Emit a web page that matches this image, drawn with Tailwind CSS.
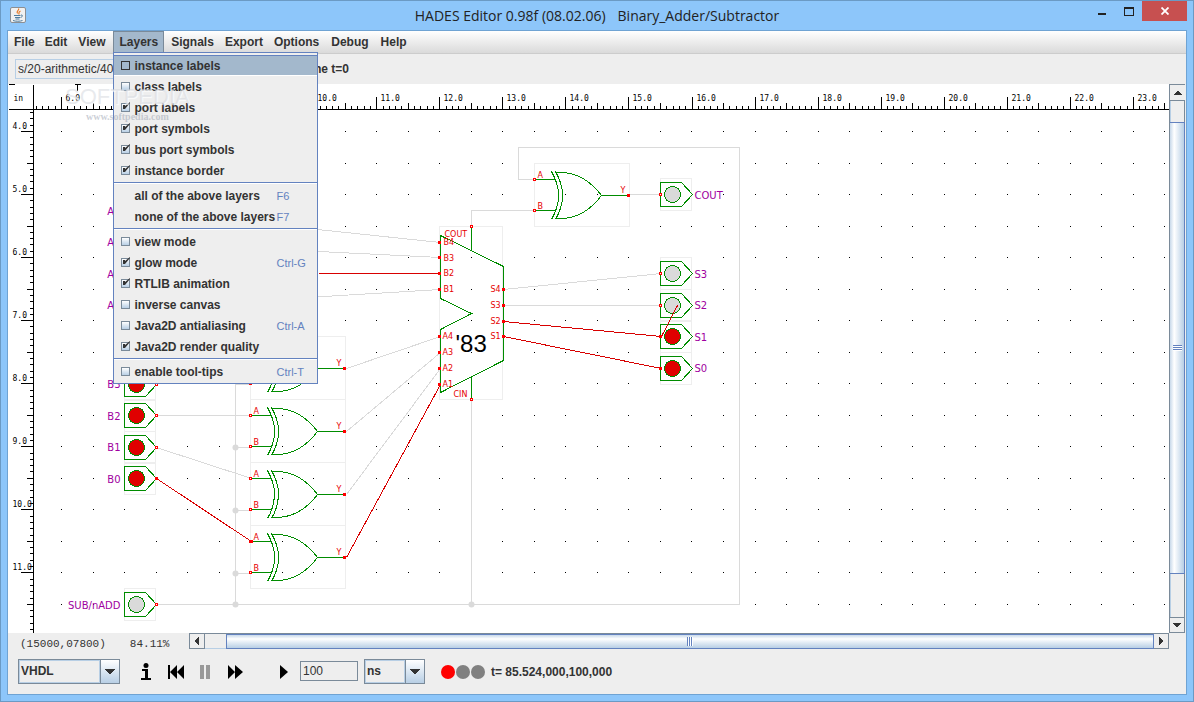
<!DOCTYPE html>
<html lang="en">
<head>
<meta charset="UTF-8" />
<meta name="viewport" content="width=device-width, initial-scale=1.0" />
<title>HADES Editor</title>
<script src="https://cdn.jsdelivr.net/npm/@tailwindcss/browser@4"></script>
</head>
<body class="h-screen overflow-hidden font-['Liberation_Sans',Arial,sans-serif] text-[12px] leading-[14px] text-[#333]">
<div class="flex h-screen flex-col border border-[#6b9ac4] bg-[#8dc6fa] px-[6px] pb-[6px]">

  <!-- title bar -->
  <header class="relative flex h-[29px] shrink-0 items-center justify-center">
    <svg class="absolute left-[3px] top-[6px]" width="16" height="16" viewBox="0 0 16 16">
      <rect x=".5" y=".5" width="15" height="15" rx="1.5" fill="#f1f1f1" stroke="#8b8f94" />
      <path d="M8.5 1.5c1.5 1.500-3 2.500-1 5M10.500 4c-2.500 1-1.500 2-1.500 3.500" fill="none" stroke="#e87722" stroke-width="1.200" />
      <path d="M4 8.500h6.500M5 10.500h5M5.500 12h4M3 13.500c2.500 1 7 1 9.500 0M11 8c2.500 0 1.500 2-.5 2.500" fill="none" stroke="#4f7d9f" />
    </svg>
    <h1 class="flex gap-3 font-['Open_Sans',sans-serif] text-[14px] leading-[20px] text-[#222]"><span>HADES Editor 0.98f (08.02.06)</span><span>Binary_Adder/Subtractor</span></h1>
    <div class="absolute right-0 top-0 flex">
      <button aria-label="Minimize" class="flex h-[20px] w-[28px] items-center justify-center"><svg width="8" height="20"><rect y="12" width="8" height="2" fill="#222" /></svg></button>
      <button aria-label="Maximize" class="flex h-[20px] w-[26px] items-center justify-center"><svg width="10" height="20" shape-rendering="crispEdges"><path d="M.5 6v8.500h9V6" fill="none" stroke="#222" /><rect y="6" width="10" height="2" fill="#222" /></svg></button>
      <button aria-label="Close" class="flex h-[20px] w-[45px] items-center justify-center bg-[#c75050]"><svg width="8" height="8" viewBox="0 0 8 8"><path d="M.5.5l7 7M7.500.5l-7 7" stroke="#fff" stroke-width="1.800" /></svg></button>
    </div>
  </header>

  <main class="flex min-h-0 flex-1 flex-col border border-[#6fa3d3] bg-[#eee]">

    <!-- menu bar -->
    <nav class="flex h-[23px] shrink-0 border-b border-[#ccc] bg-linear-to-b from-white to-[#dadada] pl-px font-bold">
      <button class="px-[5px]">File</button>
      <button class="px-[5px]">Edit</button>
      <button class="px-[6px]">View</button>
      <div class="relative z-10 ml-[2px]">
        <button class="h-[21px] border border-[#7a8a99] border-b-0 bg-[#a3b8cc] px-[5px]">Layers</button>
        <div class="absolute left-0 top-[21px] w-[205px] border border-[#6382bf] bg-[#eee] pb-px pt-[2px]" id="layersMenu">
          <label class="flex h-[21px] items-center border-t border-b border-t-[#6382bf] border-b-white bg-[#a3b8cc] pl-[7px]"><input type="checkbox" class="mr-[4px] size-[9px] appearance-none border border-[#333]" />instance labels</label>
          <label class="flex h-[21px] items-center pl-[7px]"><input type="checkbox" class="mr-[4px] size-[9px] appearance-none border border-[#7a8a99] bg-linear-to-b from-white to-[#b8cfe5]" />class labels</label>
          <label class="relative flex h-[21px] items-center pl-[7px]"><input type="checkbox" checked class="mr-[4px] size-[9px] appearance-none border border-[#7a8a99] bg-linear-to-b from-white to-[#b8cfe5]" /><svg class="absolute left-[8px] top-[5px]" width="9" height="9"><use href="#tick" /></svg>port labels</label>
          <label class="relative flex h-[21px] items-center pl-[7px]"><input type="checkbox" checked class="mr-[4px] size-[9px] appearance-none border border-[#7a8a99] bg-linear-to-b from-white to-[#b8cfe5]" /><svg class="absolute left-[8px] top-[5px]" width="9" height="9"><use href="#tick" /></svg>port symbols</label>
          <label class="relative flex h-[21px] items-center pl-[7px]"><input type="checkbox" checked class="mr-[4px] size-[9px] appearance-none border border-[#7a8a99] bg-linear-to-b from-white to-[#b8cfe5]" /><svg class="absolute left-[8px] top-[5px]" width="9" height="9"><use href="#tick" /></svg>bus port symbols</label>
          <label class="relative flex h-[21px] items-center pl-[7px]"><input type="checkbox" checked class="mr-[4px] size-[9px] appearance-none border border-[#7a8a99] bg-linear-to-b from-white to-[#b8cfe5]" /><svg class="absolute left-[8px] top-[5px]" width="9" height="9"><use href="#tick" /></svg>instance border</label>
          <hr class="my-px h-[2px] border-t border-[#6382bf] bg-white" />
          <button class="flex h-[21px] w-full items-center pl-[20px] text-left"><span class="w-[142px] whitespace-nowrap">all of the above layers</span><kbd class="font-['Liberation_Sans',sans-serif] text-[11px] font-normal text-[#6382bf]">F6</kbd></button>
          <button class="flex h-[21px] w-full items-center pl-[20px] text-left"><span class="w-[142px] whitespace-nowrap">none of the above layers</span><kbd class="font-['Liberation_Sans',sans-serif] text-[11px] font-normal text-[#6382bf]">F7</kbd></button>
          <hr class="my-px h-[2px] border-t border-[#6382bf] bg-white" />
          <label class="flex h-[21px] items-center pl-[7px]"><input type="checkbox" class="mr-[4px] size-[9px] appearance-none border border-[#7a8a99] bg-linear-to-b from-white to-[#b8cfe5]" />view mode</label>
          <label class="relative flex h-[21px] items-center pl-[7px]"><input type="checkbox" checked class="mr-[4px] size-[9px] appearance-none border border-[#7a8a99] bg-linear-to-b from-white to-[#b8cfe5]" /><svg class="absolute left-[8px] top-[5px]" width="9" height="9"><use href="#tick" /></svg><span class="w-[142px]">glow mode</span><kbd class="font-['Liberation_Sans',sans-serif] text-[11px] font-normal text-[#6382bf]">Ctrl-G</kbd></label>
          <label class="relative flex h-[21px] items-center pl-[7px]"><input type="checkbox" checked class="mr-[4px] size-[9px] appearance-none border border-[#7a8a99] bg-linear-to-b from-white to-[#b8cfe5]" /><svg class="absolute left-[8px] top-[5px]" width="9" height="9"><use href="#tick" /></svg>RTLIB animation</label>
          <label class="flex h-[21px] items-center pl-[7px]"><input type="checkbox" class="mr-[4px] size-[9px] appearance-none border border-[#7a8a99] bg-linear-to-b from-white to-[#b8cfe5]" />inverse canvas</label>
          <label class="flex h-[21px] items-center pl-[7px]"><input type="checkbox" class="mr-[4px] size-[9px] appearance-none border border-[#7a8a99] bg-linear-to-b from-white to-[#b8cfe5]" /><span class="w-[142px]">Java2D antialiasing</span><kbd class="font-['Liberation_Sans',sans-serif] text-[11px] font-normal text-[#6382bf]">Ctrl-A</kbd></label>
          <label class="relative flex h-[21px] items-center pl-[7px]"><input type="checkbox" checked class="mr-[4px] size-[9px] appearance-none border border-[#7a8a99] bg-linear-to-b from-white to-[#b8cfe5]" /><svg class="absolute left-[8px] top-[5px]" width="9" height="9"><use href="#tick" /></svg>Java2D render quality</label>
          <hr class="my-px h-[2px] border-t border-[#6382bf] bg-white" />
          <label class="flex h-[21px] items-center pl-[7px]"><input type="checkbox" class="mr-[4px] size-[9px] appearance-none border border-[#7a8a99] bg-linear-to-b from-white to-[#b8cfe5]" /><span class="w-[142px]">enable tool-tips</span><kbd class="font-['Liberation_Sans',sans-serif] text-[11px] font-normal text-[#6382bf]">Ctrl-T</kbd></label>
        </div>
      </div>
      <button class="pl-[7px] pr-[5px]">Signals</button>
      <button class="pl-[6px] pr-[5px]">Export</button>
      <button class="px-[6px]">Options</button>
      <button class="px-[6px]">Debug</button>
      <button class="px-[6px]">Help</button>
    </nav>

    <!-- location bar -->
    <div class="flex h-[30px] shrink-0 items-center pl-[7px]">
      <input aria-label="Design path" value="s/20-arithmetic/40" readonly class="h-[20px] w-[240px] border border-[#b8cfe5] bg-[#eee] px-[2px]" />
      <span class="w-[94px] text-right font-bold">Time t=0</span>
    </div>

    <!-- drawing area -->
    <div class="flex min-h-0 flex-1">
      <div class="relative min-w-0 flex-1 overflow-hidden bg-white">
        <svg id="canvas" class="block h-full w-full" shape-rendering="crispEdges">
          <defs>
            <path id="tick" d="M1 3v4h2l5-6V0L3 4V3z" fill="#333" />
            <g id="xor">
              <path d="M0 0H95V63H0z" fill="none" stroke="#eee" />
              <path d="M0 16H21M0 47H21M67 32H95M20 9H28C46 10 58 20 67 32C58 44 46 54 28 55H20M21 8Q35 32 21 56M17 8Q31 32 17 56" fill="none" stroke="#008c00" />
              <path d="M-1 15h2v2h-2zM-1 46h2v2h-2z" fill="#fff" stroke="#f00" />
              <path d="M93 31h2v2h-2z" fill="#f00" stroke="#f00" />
              <g fill="#e60000"><text x="3" y="14">A</text><text x="3" y="45">B</text><text x="86" y="29">Y</text></g>
            </g>
            <g id="port">
              <path d="M0-16H31V16H0z" fill="none" stroke="#eee" />
              <path d="M0-12H21L32 0L21 12H0z" fill="#fff" stroke="#008c00" />
              <circle cx="12" r="8" stroke="#008c00" />
            </g>
            <path id="pin" d="M-1-1h2v2h-2z" stroke="#f00" />
          </defs>
          <!-- page offset of the area plus half a pixel, so that 1px strokes stay sharp -->
          <g transform="translate(-7.5 -83.5)">
            <g id="ruler" fill="none" stroke="#000"></g>
            <g id="rulerText" class="font-['DejaVu_Sans_Mono',monospace] text-[8px]" fill="#000"></g>

            <g fill="none" stroke="#dadada">
              <path d="M156 212L440 242M156 243L440 257M156 306L440 289M346 368L440 336M346 431L440 352M346 494L440 368" />
              <path d="M156 384L251 352M156 415H251M156 447L251 478M235 352V604M235 384H251M235 447H251M235 510H251M235 573H251" />
              <path d="M156 604H739V147H518V179H534M471 604V399M471 226V210H534M629 194H661M503 289L661 273M503 305H661" />
            </g>
            <g fill="#dadada" shape-rendering="geometricPrecision">
              <circle cx="235" cy="447" r="3" /><circle cx="235" cy="510" r="3" /><circle cx="235" cy="573" r="3" /><circle cx="235" cy="604" r="3" /><circle cx="471" cy="604" r="3" />
            </g>

            <g class="font-['DejaVu_Sans',sans-serif] text-[8px]">
              <use href="#xor" x="250" y="336" />
              <use href="#xor" x="250" y="399" />
              <use href="#xor" x="250" y="462" />
              <use href="#xor" x="250" y="525" />
              <use href="#xor" x="534" y="163" />
            </g>

            <g fill="#e00000">
              <use href="#port" x="124" y="384" /><use href="#port" x="124" y="415" /><use href="#port" x="124" y="447" /><use href="#port" x="124" y="478" />
              <use href="#port" x="660" y="336" /><use href="#port" x="660" y="368" />
            </g>
            <g fill="#dadada">
              <use href="#port" x="124" y="604" />
              <use href="#port" x="660" y="194" /><use href="#port" x="660" y="273" /><use href="#port" x="660" y="305" />
            </g>

            <!-- 4 bit adder -->
            <path d="M439 226H502V399H439z" fill="none" stroke="#eee" />
            <path d="M440 235L503 266V360L440 392V329L471 313L440 298zM471 226V250M471 376V399" fill="none" stroke="#008c00" />

            <path d="M156 478L251 541M346 557L440 384M318 273H440M503 321L661 336L677 305M503 336L661 368" fill="none" stroke="#d80000" />

            <g fill="#f00">
              <use href="#pin" x="439" y="242" /><use href="#pin" x="439" y="257" /><use href="#pin" x="439" y="273" /><use href="#pin" x="439" y="289" />
              <use href="#pin" x="439" y="336" /><use href="#pin" x="439" y="352" /><use href="#pin" x="439" y="368" /><use href="#pin" x="439" y="384" />
              <use href="#pin" x="503" y="289" /><use href="#pin" x="503" y="305" /><use href="#pin" x="503" y="321" /><use href="#pin" x="503" y="336" />
              <use href="#pin" x="156" y="478" /><use href="#pin" x="251" y="541" /><use href="#pin" x="660" y="336" /><use href="#pin" x="660" y="368" />
            </g>
            <g fill="#fff">
              <use href="#pin" x="471" y="226" /><use href="#pin" x="471" y="399" />
              <use href="#pin" x="156" y="384" /><use href="#pin" x="156" y="415" /><use href="#pin" x="156" y="447" /><use href="#pin" x="156" y="604" />
              <use href="#pin" x="660" y="194" /><use href="#pin" x="660" y="273" /><use href="#pin" x="660" y="305" />
            </g>

            <g class="font-['DejaVu_Sans',sans-serif] text-[8px]" fill="#e60000">
              <text x="444" y="236">COUT</text><text x="453" y="396">CIN</text>
              <text x="443" y="244">B4</text><text x="443" y="260">B3</text><text x="443" y="275">B2</text><text x="443" y="291">B1</text>
              <text x="442" y="338">A4</text><text x="442" y="354">A3</text><text x="442" y="370">A2</text><text x="442" y="386">A1</text>
              <text x="490" y="291">S4</text><text x="490" y="307">S3</text><text x="490" y="323">S2</text><text x="490" y="338">S1</text>
            </g>
            <text x="455" y="351" class="text-[24px]" fill="#000">'83</text>
            <g class="font-['DejaVu_Sans',sans-serif] text-[10px]" fill="#a000a0">
              <g text-anchor="end">
                <text x="120" y="214">A3</text><text x="120" y="245">A2</text><text x="120" y="277">A1</text><text x="120" y="308">A0</text>
                <text x="120" y="387">B3</text><text x="120" y="419">B2</text><text x="120" y="450">B1</text><text x="120" y="482">B0</text><text x="120" y="608">SUB/nADD</text>
              </g>
              <text x="694" y="198">COUT</text><text x="694" y="277">S3</text><text x="694" y="308">S2</text><text x="694" y="340">S1</text><text x="694" y="371">S0</text>
            </g>
          </g>
        </svg>
      </div>

      <!-- vertical scroll bar -->
      <div class="mr-px flex w-[16px] shrink-0 flex-col border-l border-t border-[#7a8a99]">
        <button aria-label="Scroll up" class="flex h-[16px] items-center justify-center border-b border-[#7a8a99]"><svg width="8" height="4" shape-rendering="crispEdges"><path d="M0 4V3h1V2h1V1h1V0h2v1h1v1h1v1h1v1z" fill="#333" /></svg></button>
        <div class="flex-21 border-l border-r border-l-[#b8cfe5] border-r-[#7a8a99]"></div>
        <div class="flex flex-451 items-center justify-center border border-l-0 border-[#6382bf] bg-linear-to-r from-[#c8d9ea] via-white via-30% to-[#b8cfe5]"><svg width="9" height="6" shape-rendering="crispEdges"><path d="M0 .5h9M0 2.500h9M0 4.500h9" stroke="#6382bf" /><path d="M0 1.500h9M0 3.500h9M0 5.500h9" stroke="#fff" /></svg></div>
        <div class="flex-43 border-l border-r border-l-[#b8cfe5] border-r-[#7a8a99]"></div>
        <button aria-label="Scroll down" class="flex h-[16px] items-center justify-center border-y border-r border-[#7a8a99]"><svg width="8" height="4" shape-rendering="crispEdges"><path d="M0 0v1h1v1h1v1h1v1h2V3h1V2h1V1h1V0z" fill="#333" /></svg></button>
      </div>
    </div>

    <!-- coordinates and horizontal scroll bar -->
    <div class="flex h-[17px] shrink-0 pr-[17px]">
      <div class="flex w-[181px] gap-[24px] whitespace-nowrap pl-[12px] pt-[4px] font-['Liberation_Mono',monospace] text-[11px]"><span>(15000,07800)</span><span>84.11%</span></div>
      <div class="flex h-[16px] flex-1 border-l border-t border-[#7a8a99]">
        <button aria-label="Scroll left" class="flex w-[15px] items-center justify-center border-r border-b border-[#7a8a99]"><svg width="4" height="8" shape-rendering="crispEdges"><path d="M4 0H3v1H2v1H1v1H0v2h1v1h1v1h1v1h1z" fill="#333" /></svg></button>
        <div class="flex-21 border-b border-[#b8cfe5]"></div>
        <div class="flex flex-927 items-center justify-center border border-[#6382bf] bg-linear-to-b from-[#c8d9ea] via-white via-30% to-[#b8cfe5]"><svg width="6" height="9" shape-rendering="crispEdges"><path d="M.5 0v9M2.500 0v9M4.500 0v9" stroke="#6382bf" /><path d="M1.500 0v9M3.500 0v9M5.500 0v9" stroke="#fff" /></svg></div>
        <button aria-label="Scroll right" class="flex w-[15px] items-center justify-center border-r border-b border-[#7a8a99]"><svg width="4" height="8" shape-rendering="crispEdges"><path d="M0 0h1v1h1v1h1v1h1v2H3v1H2v1H1v1H0z" fill="#333" /></svg></button>
      </div>
    </div>

    <!-- simulation controls -->
    <footer class="flex h-[44px] shrink-0 items-center pb-[2px] pl-[10px] font-bold">
      <div class="relative h-[25px] w-[102px]">
        <select aria-label="Language" class="h-full w-full appearance-none border border-[#7a8a99] bg-[#eee] pl-[2px]"><option>VHDL</option></select>
        <span class="pointer-events-none absolute inset-y-px left-px w-[81px] border border-[#b8cfe5]"></span>
        <span class="pointer-events-none absolute inset-y-px right-px flex w-[19px] items-center justify-center border-l border-[#7a8a99] bg-linear-to-b from-white to-[#b8cfe5]"><svg width="10" height="5" shape-rendering="crispEdges"><path d="M0 0v1h1v1h1v1h1v1h1v1h2V4h1V3h1V2h1V1h1V0z" fill="#333" /></svg></span>
      </div>
      <button aria-label="Info" class="ml-[19px] flex w-[14px] justify-center pt-px"><svg width="10" height="17"><circle cx="5" cy="2.500" r="2.500" /><path d="M1 6h6v9h3v2H0v-2h4V8H1z" /></svg></button>
      <button aria-label="Rewind" class="ml-[14px] pt-px"><svg width="18" height="14"><path d="M1 0h2v14H1zM3 7l7-7v14zM10 7l7-7v14z" /></svg></button>
      <button aria-label="Pause" class="ml-[15px] pt-px"><svg width="11" height="14"><path d="M0 0h4v14H0zM6 0h4v14H6z" fill="#999" /></svg></button>
      <button aria-label="Fast forward" class="ml-[17px] pt-px"><svg width="16" height="14"><path d="M0 0l7 7-7 7zM7 0l8 7-8 7z" /></svg></button>
      <button aria-label="Run" class="ml-[36px] pt-px"><svg width="8" height="14"><path d="M0 0l8 7-8 7z" /></svg></button>
      <input aria-label="Time step" value="100" class="ml-[12px] h-[20px] w-[58px] border border-[#7a8a99] bg-[#eee] px-[2px] font-normal" />
      <div class="relative ml-[6px] h-[25px] w-[61px]">
        <select aria-label="Time unit" class="h-full w-full appearance-none border border-[#7a8a99] bg-[#eee] pl-[2px]"><option>ns</option></select>
        <span class="pointer-events-none absolute inset-y-px left-px w-[40px] border border-[#b8cfe5]"></span>
        <span class="pointer-events-none absolute inset-y-px right-px flex w-[19px] items-center justify-center border-l border-[#7a8a99] bg-linear-to-b from-white to-[#b8cfe5]"><svg width="10" height="5" shape-rendering="crispEdges"><path d="M0 0v1h1v1h1v1h1v1h1v1h2V4h1V3h1V2h1V1h1V0z" fill="#333" /></svg></span>
      </div>
      <svg class="ml-[16px]" width="45" height="16"><circle cx="7" cy="9" r="7" fill="#f00" /><circle cx="22" cy="9" r="7" fill="#808080" /><circle cx="37" cy="9" r="7" fill="#808080" /></svg>
      <span class="ml-[5px] pt-[2px]">t= 85.524,000,100,000</span>
    </footer>
  </main>
</div>

<!-- watermark -->
<div class="pointer-events-none absolute left-[65px] top-[84px] z-20 text-center text-gray-300/50">
  <div class="text-[22px] leading-[26px] [text-shadow:1px_1px_1px_rgba(255,255,255,.8)]">SOFTPEDIA</div>
  <div class="font-['Liberation_Serif',serif] text-[10px] font-bold text-gray-400/50">www.softpedia.com</div>
</div>

<script>
const STEP = 63.05;   // pixels per inch at 84%
const X6 = 61, Y4 = 131;
const box = document.getElementById('canvas').getBoundingClientRect();
const W = box.right, H = box.bottom;

let d = `M8 109H${W}M33 84V${H}M8 84H14M74 84H80M77 84V90`;
let labels = '<text x="13" y="100">in</text>';

// horizontal ruler
for (let i = -4; X6 + i * STEP / 10 < W; i++) {
  const x = Math.round(X6 + i * STEP / 10);
  const len = i % 10 === 0 ? 13 : i % 5 === 0 ? 7 : 4;
  d += `M${x} 109v-${len}`;
  if (i % 10 === 0) labels += `<text x="${x + 4}" y="100">${6 + i / 10}.0</text>`;
}
// vertical ruler
for (let i = -3; Y4 + i * STEP / 10 < H; i++) {
  const y = Math.round(Y4 + i * STEP / 10);
  const len = i % 10 === 0 ? 13 : i % 5 === 0 ? 7 : 4;
  d += `M33 ${y}h-${len}`;
  if (i % 10 === 0) labels += `<text x="12" y="${y - 3}">${4 + i / 10}.0</text>`;
}
// grid dots, two per inch
for (let x = X6; x < W; x += STEP / 2)
  for (let y = Y4; y < H; y += STEP / 2)
    d += `M${Math.round(x) - .5} ${Math.round(y)}h1`;

document.getElementById('ruler').innerHTML = `<path d="${d}"/>`;
document.getElementById('rulerText').innerHTML = labels;
</script>
</body>
</html>
